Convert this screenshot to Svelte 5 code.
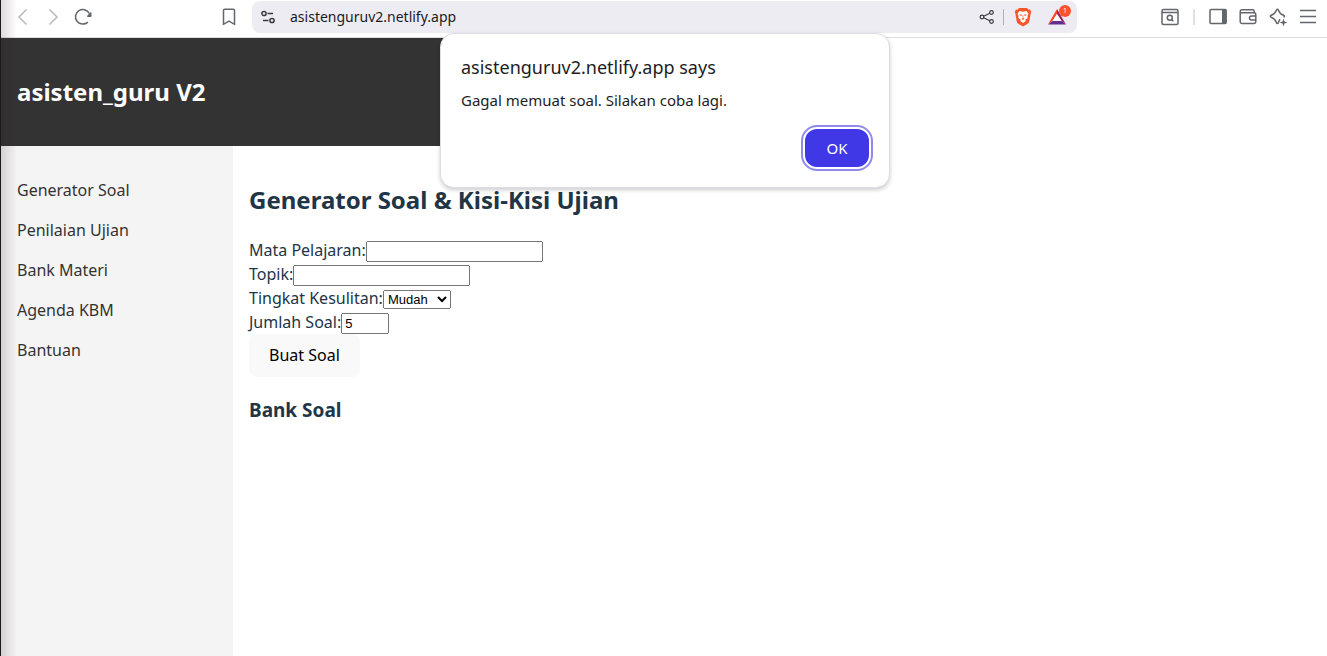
<script>
  const menu = ['Generator Soal', 'Penilaian Ujian', 'Bank Materi', 'Agenda KBM', 'Bantuan'];
  let subject = $state('');
  let topic = $state('');
  let level = $state('Mudah');
  let count = $state(5);
  let alertOpen = $state(true);
</script>

<div class="window">
  <div class="toolbar">
    <button class="tool faded" aria-label="Back">
      <svg width="20" height="20" viewBox="0 0 20 20"><path d="m13.500 2.500-7.500 7.500 7.500 7.500" /></svg>
    </button>
    <button class="tool faded" aria-label="Forward">
      <svg width="20" height="20" viewBox="0 0 20 20"><path d="m6.500 2.500 7.500 7.500-7.500 7.500" /></svg>
    </button>
    <button class="tool" aria-label="Reload">
      <svg width="20" height="20" viewBox="0 0 20 20">
        <path d="M14.800 15.100A7.300 7.300 0 1 1 16.300 6.500" />
        <path class="solid tiny" d="M17.900 5.200c.4 0 .6.300.6.700v3.300c0 .4-.3.700-.7.700h-3.100c-.6 0-.9-.7-.5-1.100l3.100-3.400c.1-.1.400-.2.6-.2Z" />
      </svg>
    </button>
    <button class="tool bookmark" aria-label="Bookmark">
      <svg width="20" height="20" viewBox="0 0 20 20"><path d="M4.500 17.300V3.500c0-.8.500-1.300 1.300-1.300h8.400c.8 0 1.300.5 1.300 1.300v13.800L10 14.200Z" /></svg>
    </button>

    <div class="address">
      <button class="small" aria-label="Site settings">
        <svg width="16" height="16" viewBox="0 0 16 16">
          <circle cx="4" cy="4.500" r="2.100" /><path d="M7.500 4.500H13M3 11.500h5.500" /><circle cx="12" cy="11.500" r="2.100" />
        </svg>
      </button>
      <span class="url">asistenguruv2.netlify.app</span>
      <button class="small" aria-label="Share">
        <svg class="thin" width="16" height="16" viewBox="0 0 16 16">
          <circle cx="3" cy="8" r="1.800" /><circle cx="12.500" cy="3.500" r="1.800" /><circle cx="12.500" cy="12.500" r="1.800" />
          <path d="m4.700 7.200 6.100-2.900M4.700 8.800l6.100 2.900" />
        </svg>
      </button>
      <span class="line"></span>
      <button class="shield" aria-label="Shields">
        <svg width="18" height="20" viewBox="0 0 18 20">
          <path fill="#fb542b" d="M5 1h8l1.500 1.700 1.700-.2 1 2.700-.6 1.500-1.300 7.600c-.3 1.400-1 2-2 2.800L9 19.500l-4.300-2.400c-1-.8-1.700-1.400-2-2.800L1.400 6.700.8 5.200l1-2.700 1.700.2Z" />
          <path fill="#fff" d="m5.500 4 3.500.7 3.500-.7 2 2.700-1 2.100.2 2.200-2.500 1.800.6 1.100L9 16l-2.800-2.100.6-1.100L4.300 11l.2-2.200-1-2.100Z" />
          <path fill="#fb542b" d="m5.500 7.200 2.700.6-.8 1-1.500-.4ZM12.500 7.200l-2.700.6.8 1 1.500-.4ZM8.700 8h.6v3.200l1.200.6L9 12.900l-1.500-1.100 1.200-.6Z" />
        </svg>
      </button>
      <button class="rewards" aria-label="Rewards">
        <svg width="20" height="18" viewBox="0 0 20 18">
          <path fill="#ff4724" d="M10 1v5L5.500 13 1 16.500Z" />
          <path fill="#9e1f63" d="M10 1v5l4.500 7 4.500 3.500Z" />
          <path fill="#662d91" d="M1 16.500h18L14.500 13h-9Z" />
          <path fill="#fff" d="m10 6 4.500 7h-9Z" />
        </svg>
        <span class="badge">1</span>
      </button>
    </div>

    <div class="actions">
      <button class="tool" aria-label="Search tabs">
        <svg width="20" height="20" viewBox="0 0 20 20">
          <rect x="2" y="2.500" width="16" height="15" rx="1.500" /><path d="M2 5.500h16" />
          <circle cx="9.800" cy="10.800" r="2.500" /><path d="m11.700 12.700 1.600 1.600" />
        </svg>
      </button>
      <span class="line pale"></span>
      <button class="tool" aria-label="Side panel">
        <svg width="20" height="20" viewBox="0 0 20 20">
          <rect x="2" y="2.500" width="16" height="14" rx="1" /><path class="solid tiny" d="M14 2h3.500l1.200 1v13l-1.200 1H14Z" />
        </svg>
      </button>
      <button class="tool" aria-label="Wallet">
        <svg width="20" height="20" viewBox="0 0 20 20">
          <path d="M2.200 4.500c0-1 .7-1.700 1.700-1.700h10.600c1 0 1.700.7 1.700 1.700v1.200M2.200 4.500v10.300c0 1 .7 1.700 1.700 1.700h12.200c1 0 1.700-.7 1.700-1.700V7.400c0-1-.7-1.700-1.700-1.700H3.400c-.7 0-1.200-.5-1.200-1.200ZM17.800 9h-4.300a2 2 0 0 0 0 4h4.300" />
        </svg>
      </button>
      <button class="tool" aria-label="Assistant">
        <svg width="20" height="20" viewBox="0 0 20 20">
          <path d="M15.500 10.300c1.300-.6 1.300-1.500.1-2C12.400 7.200 11.500 6 10.300 2.900c-.3-.9-1.500-.9-1.800 0C7.300 6 6.400 7.200 3.200 8.300c-1.200.4-1.200 1.500 0 2 3.200 1.100 4.100 2.300 5.300 5.400.3.900 1.500.9 1.800 0 .6-1.500 1-2.500 1.800-3.300" />
          <path class="solid tiny" d="m15.500 11.500 1 3 3 1-3 1-1 3-1-3-3-1 3-1Z" />
        </svg>
      </button>
      <button class="tool" aria-label="Menu">
        <svg width="20" height="20" viewBox="0 0 20 20"><path d="M2 3.500h16M2 9.500h16M2 15.500h16" /></svg>
      </button>
    </div>
  </div>

  <header><h1>asisten_guru V2</h1></header>

  <div class="body">
    <nav>
      <ul>
        {#each menu as item}
          <li><a href="#top">{item}</a></li>
        {/each}
      </ul>
    </nav>
    <main>
      <h2>Generator Soal &amp; Kisi-Kisi Ujian</h2>
      <form onsubmit={(e) => e.preventDefault()}>
        <div class="row"><label for="subject">Mata Pelajaran:</label><input id="subject" type="text" bind:value={subject} /></div>
        <div class="row"><label for="topic">Topik:</label><input id="topic" type="text" bind:value={topic} /></div>
        <div class="row">
          <label for="level">Tingkat Kesulitan:</label><select id="level" bind:value={level}>
            <option>Mudah</option><option>Sedang</option><option>Sulit</option>
          </select>
        </div>
        <div class="row"><label for="count">Jumlah Soal:</label><input id="count" class="count" type="number" bind:value={count} /></div>
        <button class="submit">Buat Soal</button>
      </form>
      <h3>Bank Soal</h3>
    </main>
  </div>

  <div class="edge"></div>

  {#if alertOpen}
    <div class="overlay">
      <div class="alert" role="alertdialog" aria-labelledby="alert-title" aria-describedby="alert-text">
        <div class="alert-title" id="alert-title">asistenguruv2.netlify.app says</div>
        <div class="alert-text" id="alert-text">Gagal memuat soal. Silakan coba lagi.</div>
        <button class="ok" onclick={() => (alertOpen = false)}>OK</button>
      </div>
    </div>
  {/if}
</div>

<style>
  :global(body) { margin: 0; }
  .window {
    position: relative;
    box-sizing: border-box;
    min-height: 100vh;
    display: flex;
    flex-direction: column;
    border-left: 1px solid #1b1b1b;
    background: #fff;
    color: #213547;
    font: 16px/24px "Noto Sans", sans-serif;
  }
  button { font-family: inherit; cursor: pointer; }

  .toolbar {
    display: flex;
    align-items: center;
    box-sizing: border-box;
    height: 38px;
    padding: 0 4px 4px 7px;
    border-bottom: 1px solid #dedee0;
  }
  .tool, .small, .shield, .rewards {
    display: flex;
    align-items: center;
    justify-content: center;
    flex: none;
    padding: 0;
    border: 0;
    background: none;
  }
  .tool { width: 30px; height: 30px; color: #62666d; }
  .faded { color: #b9babd; }
  .bookmark { margin: 0 8px 0 116px; }
  .tool svg, .small svg { fill: none; stroke: currentColor; stroke-width: 1.5; }
  .solid { fill: currentColor; }
  .tiny { stroke: none; }
  .small svg.thin { stroke-width: 1.2; }
  .small { width: 16px; color: #3b3b42; }
  .address {
    flex: 1;
    min-width: 0;
    display: flex;
    align-items: center;
    height: 32px;
    padding: 0 0 0 8px;
    border-radius: 8px;
    background: #edecf2;
  }
  .url { flex: 1; margin-left: 14px; color: #1b1b1f; font-size: 14px; }
  .line { width: 1px; height: 16px; margin: 0 10px 0 8px; background: #b2b1b9; }
  .pale { width: 2px; margin: 0 8px; background: #e0e0e6; }
  .shield { width: 18px; }
  .rewards { position: relative; width: 20px; margin: 0 10px 0 15px; }
  .badge {
    position: absolute;
    top: -3px;
    right: -4px;
    width: 12px;
    height: 12px;
    border-radius: 6px;
    background: #fb542b;
    color: #fff;
    font-size: 7px;
    line-height: 12px;
    text-align: center;
  }
  .actions { display: flex; align-items: center; margin-left: 78px; }

  header { width: 50%; box-sizing: border-box; padding: 16px; background: #333; color: #fff; }
  h1, h2 { margin: 20px 0; font-size: 24px; line-height: 36px; }
  h3 { margin: 19px 0; font-size: 19px; line-height: 28px; }
  .body { flex: 1; display: flex; }
  nav { flex: none; box-sizing: border-box; width: 232px; padding: 16px; background: #f4f4f4; }
  ul { display: grid; gap: 16px; margin: 16px 0; padding: 0; list-style: none; }
  a { color: #333; text-decoration: none; }
  main { flex: 1; padding: 16px; }
  .row { height: 24px; }
  input, select { font: 13px "Liberation Sans", Arial, sans-serif; }
  input { box-sizing: border-box; width: 177px; height: 21px; }
  select { width: 68px; }
  .count { width: 48px; }
  .submit {
    display: block;
    padding: 9px 19px;
    border: 1px solid transparent;
    border-radius: 8px;
    background: #f9f9f9;
    color: #000;
    font-size: 16px;
    line-height: 23px;
  }

  .edge {
    position: absolute;
    inset: 0 auto 0 0;
    width: 16px;
    background: linear-gradient(90deg, rgba(50, 25, 30, 0.16), rgba(50, 25, 30, 0));
    pointer-events: none;
  }
  .overlay {
    position: absolute;
    inset: 33px 0 auto 2px;
    display: flex;
    justify-content: center;
  }
  .alert {
    display: flex;
    flex-direction: column;
    box-sizing: border-box;
    width: 450px;
    padding: 20px;
    border: 1px solid #dddde6;
    border-radius: 14px;
    background: #fff;
    box-shadow: 0 2px 4px rgba(0, 0, 0, 0.2);
    color: #1d1d22;
  }
  .alert-title { font-size: 18px; line-height: 26px; }
  .alert-text { margin-top: 8px; font-size: 15px; line-height: 24px; }
  .ok {
    align-self: flex-end;
    width: 64px;
    height: 38px;
    margin-top: 17px;
    padding: 0;
    border: 0;
    border-radius: 12px;
    outline: 2px solid #8f8aec;
    outline-offset: 2px;
    background: #4038e6;
    color: #fff;
    font-size: 15px;
  }
</style>
